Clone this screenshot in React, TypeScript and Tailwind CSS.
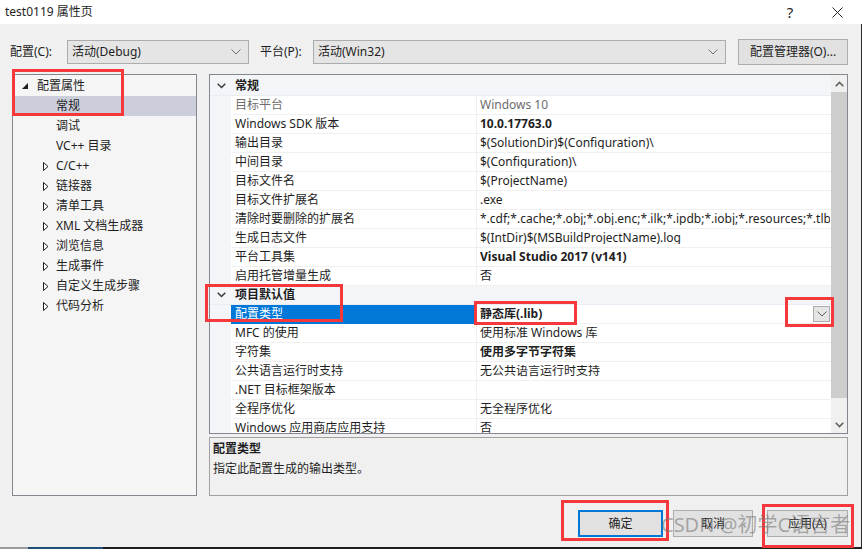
import React from 'react';

interface TreeItem {
  label: string;
  level: 0 | 1;
  kind?: 'expanded' | 'collapsed';
  selected?: boolean;
}

interface PropRow {
  label: string;
  value: string;
  bold?: boolean;
  disabled?: boolean;
  selected?: boolean;
  dropdown?: boolean;
}

const tree: TreeItem[] = [
  { label: '配置属性', level: 0, kind: 'expanded' },
  { label: '常规', level: 1, selected: true },
  { label: '调试', level: 1 },
  { label: 'VC++ 目录', level: 1 },
  { label: 'C/C++', level: 1, kind: 'collapsed' },
  { label: '链接器', level: 1, kind: 'collapsed' },
  { label: '清单工具', level: 1, kind: 'collapsed' },
  { label: 'XML 文档生成器', level: 1, kind: 'collapsed' },
  { label: '浏览信息', level: 1, kind: 'collapsed' },
  { label: '生成事件', level: 1, kind: 'collapsed' },
  { label: '自定义生成步骤', level: 1, kind: 'collapsed' },
  { label: '代码分析', level: 1, kind: 'collapsed' },
];

const general: PropRow[] = [
  { label: '目标平台', value: 'Windows 10', disabled: true },
  { label: 'Windows SDK 版本', value: '10.0.17763.0', bold: true },
  { label: '输出目录', value: '$(SolutionDir)$(Configuration)\\' },
  { label: '中间目录', value: '$(Configuration)\\' },
  { label: '目标文件名', value: '$(ProjectName)' },
  { label: '目标文件扩展名', value: '.exe' },
  {
    label: '清除时要删除的扩展名',
    value: '*.cdf;*.cache;*.obj;*.obj.enc;*.ilk;*.ipdb;*.iobj;*.resources;*.tlb;*.tli;*.tlh;*.tmp',
  },
  { label: '生成日志文件', value: '$(IntDir)$(MSBuildProjectName).log' },
  { label: '平台工具集', value: 'Visual Studio 2017 (v141)', bold: true },
  { label: '启用托管增量生成', value: '否' },
];

const defaults: PropRow[] = [
  { label: '配置类型', value: '静态库(.lib)', bold: true, selected: true, dropdown: true },
  { label: 'MFC 的使用', value: '使用标准 Windows 库' },
  { label: '字符集', value: '使用多字节字符集', bold: true },
  { label: '公共语言运行时支持', value: '无公共语言运行时支持' },
  { label: '.NET 目标框架版本', value: '' },
  { label: '全程序优化', value: '无全程序优化' },
  { label: 'Windows 应用商店应用支持', value: '否' },
];

const Chevron = ({ color = '#707070' }: { color?: string }) => (
  <svg width="10" height="6" viewBox="0 0 10 6" fill="none">
    <path d="M0.5 0.5 L5 5 L9.5 0.5" stroke={color} strokeWidth="1" />
  </svg>
);

const Select = ({ value, width }: { value: string; width: string }) => (
  <div
    className={`${width} h-[24px] flex items-center justify-between border border-[#acacac] bg-[#e5e5e5] pl-[4px] pr-[7px]`}
  >
    <span>{value}</span>
    <Chevron />
  </div>
);

const CategoryRow = ({ label }: { label: string }) => (
  <div className="h-[19px] flex items-center bg-[#f3f5f9] border-b border-[#e9ecf2]">
    <div className="w-[21px] flex justify-center pl-[2px]">
      <svg width="9" height="6" viewBox="0 0 9 6" fill="none">
        <path d="M0.7 0.7 L4.5 4.5 L8.3 0.7" stroke="#3c3c3c" strokeWidth="1.5" />
      </svg>
    </div>
    <span className="pl-[4px] font-bold text-[#1e1e1e]">{label}</span>
  </div>
);

const PropertyRow = ({ row }: { row: PropRow }) => (
  <div className="h-[19px] flex bg-[#f3f5f9]">
    <div className="w-[21px] shrink-0" />
    <div
      className={`w-[246px] shrink-0 flex items-center pl-[4px] border-r border-b border-[#f0f0f0] ${
        row.selected ? 'bg-[#0078d7] text-white border-b-[#0078d7]' : 'bg-white'
      } ${row.disabled ? 'text-[#6d6d6d]' : ''}`}
    >
      <span className="whitespace-nowrap">{row.label}</span>
    </div>
    <div className="flex-1 min-w-0 flex items-center bg-white border-b border-[#f0f0f0] pl-[3px] pr-[1px]">
      <span
        className={`flex-1 min-w-0 whitespace-nowrap overflow-hidden ${row.bold ? 'font-bold' : ''} ${
          row.disabled ? 'text-[#6d6d6d]' : 'text-[#1e1e1e]'
        }`}
      >
        {row.value}
      </span>
      {row.dropdown && (
        <div className="w-[17px] h-[16px] border border-[#adadad] bg-[#e5e5e5] flex items-center justify-center">
          <Chevron color="#606060" />
        </div>
      )}
    </div>
  </div>
);

const TreeRow = ({ item }: { item: TreeItem }) => (
  <div
    className={`h-[20px] flex items-center ${item.selected ? 'bg-[#cccedb]' : ''}`}
    style={{ paddingLeft: item.level === 0 ? 9 : 30 }}
  >
    {item.level === 0 ? (
      <>
        <svg width="6" height="6" viewBox="0 0 6 6" className="mr-[9px]">
          <polygon points="6,0 6,6 0,6" fill="#1e1e1e" />
        </svg>
        <span>{item.label}</span>
      </>
    ) : (
      <>
        <span className="w-[13px] flex items-center">
          {item.kind === 'collapsed' && (
            <svg width="6" height="9" viewBox="0 0 6 9">
              <polygon points="0.5,0.5 5,4.5 0.5,8.5" fill="white" stroke="#1e1e1e" strokeWidth="1" />
            </svg>
          )}
        </span>
        <span className="whitespace-nowrap">{item.label}</span>
      </>
    )}
  </div>
);

const Button = ({ children, width, primary }: { children: React.ReactNode; width: string; primary?: boolean }) => (
  <div
    className={`${width} h-[27px] flex items-center justify-center bg-[#e1e1e1] ${
      primary ? 'border-2 border-[#0078d7]' : 'border border-[#adadad]'
    }`}
  >
    {children}
  </div>
);

const RedBox = ({ className }: { className: string }) => (
  <div className={`absolute border-[3px] border-[#f5383b] pointer-events-none ${className}`} />
);

export default function App() {
  return (
    <div className="relative w-[862px] h-[549px] overflow-hidden bg-[#f0f0f0] text-[12px] leading-none text-[#1e1e1e] font-['Noto_Sans','Noto_Sans_CJK_SC',sans-serif]">
      {/* title bar */}
      <div className="h-[24px] bg-white flex items-center pl-[5px]">
        <span className="flex-1">test0119 属性页</span>
        <span className="w-[20px] text-[15px] text-center">?</span>
        <span className="w-[32px]" />
        <svg width="11" height="11" viewBox="0 0 11 11" className="mr-[19px]">
          <path d="M0.5 0.5 L10.5 10.5 M10.5 0.5 L0.5 10.5" stroke="#222" strokeWidth="1" />
        </svg>
      </div>

      <div className="h-[523px] flex flex-col border-r border-[#2a2a2a]">
        {/* configuration row */}
        <div className="mt-[16px] h-[24px] flex items-center pl-[10px]">
          <span className="w-[57px]">配置(C):</span>
          <Select value="活动(Debug)" width="w-[182px]" />
          <span className="ml-[11px] w-[53px]">平台(P):</span>
          <Select value="活动(Win32)" width="w-[413px]" />
          <div className="ml-[12px] w-[110px] h-[26px] border border-[#adadad] bg-[#e1e1e1] flex items-center justify-center">
            配置管理器(O)...
          </div>
        </div>

        {/* main */}
        <div className="mt-[10px] h-[422px] flex pl-[12px] gap-[12px]">
          <div className="w-[185px] border border-[#828790] bg-[#f5f5f5] pt-[1px]">
            {tree.map((item) => (
              <TreeRow key={item.label} item={item} />
            ))}
          </div>

          <div className="w-[639px] flex flex-col">
            <div className="h-[360px] border border-[#828790] bg-[#f3f5f9] flex">
              <div className="flex-1 min-w-0 overflow-hidden pt-[2px]">
                <CategoryRow label="常规" />
                {general.map((row) => (
                  <PropertyRow key={row.label} row={row} />
                ))}
                <CategoryRow label="项目默认值" />
                {defaults.map((row) => (
                  <PropertyRow key={row.label} row={row} />
                ))}
              </div>
              <div className="w-[16px] bg-[#f0f0f0] flex flex-col">
                <div className="h-[17px] flex items-center justify-center">
                  <svg width="9" height="6" viewBox="0 0 9 6" fill="none">
                    <path d="M0.7 5.3 L4.5 1.5 L8.3 5.3" stroke="#606060" strokeWidth="1.6" />
                  </svg>
                </div>
                <div className="h-[306px] bg-[#cdcdcd]" />
                <div className="flex-1" />
                <div className="h-[17px] flex items-center justify-center">
                  <svg width="9" height="6" viewBox="0 0 9 6" fill="none">
                    <path d="M0.7 0.7 L4.5 4.5 L8.3 0.7" stroke="#606060" strokeWidth="1.6" />
                  </svg>
                </div>
              </div>
            </div>

            <div className="mt-[3px] h-[59px] border border-[#a0a0a0] bg-[#f0f0f0] pl-[3px] pt-[5px]">
              <div className="font-bold">配置类型</div>
              <div className="mt-[8px]">指定此配置生成的输出类型。</div>
            </div>
          </div>
        </div>

        {/* buttons */}
        <div className="mt-[14px] flex pl-[578px]">
          <Button width="w-[85px]" primary>
            确定
          </Button>
          <div className="w-[10px]" />
          <Button width="w-[80px]">取消</Button>
          <div className="w-[14px]" />
          <Button width="w-[81px]">应用(A)</Button>
        </div>
      </div>

      <div className="h-[2px] bg-[#1e1e1e] flex">
        <div className="w-[28px] bg-[#9a9a9a]" />
        <div className="w-[75px] bg-[#1d4f7a]" />
      </div>

      {/* annotation overlays */}
      <RedBox className="left-[12px] top-[69px] w-[112px] h-[47px]" />
      <RedBox className="left-[205px] top-[284px] w-[138px] h-[38px]" />
      <RedBox className="left-[474px] top-[301px] w-[103px] h-[24px]" />
      <RedBox className="left-[785px] top-[297px] w-[49px] h-[30px]" />
      <RedBox className="left-[561px] top-[500px] w-[108px] h-[41px]" />
      <RedBox className="left-[762px] top-[504px] w-[92px] h-[44px]" />

      <div className="absolute left-[661px] top-[515px] text-[20px] leading-none whitespace-nowrap text-[#7a7a7a]/60 pointer-events-none">
        CSDN @初学C语言者
      </div>
    </div>
  );
}
